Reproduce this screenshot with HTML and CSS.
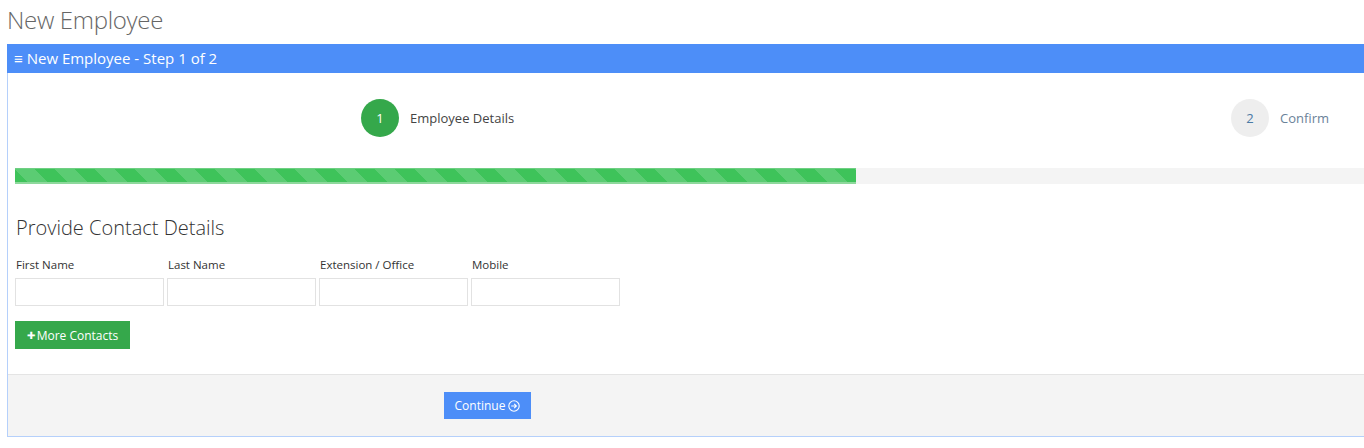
FILE: index.html
```html
<!DOCTYPE html>
<html>
<head>
<meta charset="utf-8" />
<title>New Employee</title>
<link rel="stylesheet" href="styles.css">
</head>
<body>
<h1 class="page-title">New Employee</h1>
<div class="panel">
	<div class="panel-heading"><span class="bars">&#8801;</span> New Employee - Step 1 of 2</div>
	<div class="panel-body">
		<div class="steps">
			<div class="step step-one">
				<span class="step-num active">1</span>
				<span class="step-label">Employee Details</span>
			</div>
			<div class="step step-two">
				<span class="step-num">2</span>
				<span class="step-label muted">Confirm</span>
			</div>
		</div>
		<div class="progress"><div class="progress-bar" style="width:61.85%"></div></div>
		<h2 class="section-title">Provide Contact Details</h2>
		<div class="fields">
			<div class="field"><label>First Name</label><input type="text" /></div>
			<div class="field"><label>Last Name</label><input type="text" /></div>
			<div class="field"><label>Extension / Office</label><input type="text" /></div>
			<div class="field"><label>Mobile</label><input type="text" /></div>
		</div>
		<button class="btn btn-green"><span class="plus">&#10010;</span>More Contacts</button>
	</div>
	<div class="panel-footer">
		<button class="btn btn-blue">Continue <svg class="arrow" width="12" height="12" viewBox="0 0 12 12"><circle cx="6" cy="6" r="5.2" fill="none" stroke="#fff" stroke-width="1.1"/><path d="M3.2 6h5M6.2 3.8L8.4 6 6.2 8.2" fill="none" stroke="#fff" stroke-width="1.1"/></svg></button>
	</div>
</div>
</body>
</html>
```

FILE: styles.css
```css
*{
	margin:0;
	padding:0;
	box-sizing:border-box;
}
body{
	overflow:hidden;
	background:#fff;
	font-family:"Open Sans", "Noto Sans", sans-serif;
	color:#333;
	padding:0 0 0 7px;
}
.page-title{
	font-weight:300;
	font-size:24px;
	color:#666;
	height:44px;
	line-height:40px;
	letter-spacing:-0.3px;
}
.panel{
	width:1370px;
	border:1px solid #b5d0fb;
	height:393px;
	display:flex;
	flex-direction:column;
}
.panel-heading{
	background:#4d8ef8;
	color:#fff;
	font-size:15px;
	height:29px;
	line-height:28px;
	padding-left:7px;
	margin:-1px -1px 0 -1px;
}
.bars{
	font-size:15px;
}
.panel-body{
	padding:0 0 0 7px;
	flex:1;
}
.steps{
	position:relative;
	height:95px;
}
.step{
	position:absolute;
	top:26px;
	display:flex;
	align-items:center;
}
.step-one{
	left:346px;
}
.step-two{
	left:1216px;
}
.step-num{
	width:38px;
	height:38px;
	border-radius:50%;
	background:#eee;
	color:#4b7aa5;
	font-size:13px;
	display:flex;
	align-items:center;
	justify-content:center;
	margin-right:11px;
}
.step-num.active{
	background:#35a84b;
	color:#fff;
}
.step-label{
	font-size:13px;
	color:#444;
}
.step-label.muted{
	color:#6a8299;
}
.progress{
	height:16px;
	background:#f4f4f4;
	width:1360px;
}
.progress-bar{
	height:16px;
	background-color:#3ec35a;
	background-image:linear-gradient(45deg, rgba(255,255,255,.15) 25%, transparent 25%, transparent 50%, rgba(255,255,255,.15) 50%, rgba(255,255,255,.15) 75%, transparent 75%, transparent);
	background-size:40px 40px;
	border-bottom:2px solid #8ed89c;
	border-top:1px solid #6fcf83;
}
.section-title{
	font-weight:300;
	font-size:20px;
	color:#333;
	margin-top:30px;
	padding-left:1px;
	height:40px;
}
.fields{
	display:flex;
	gap:3px;
	margin-top:4px;
}
.field{
	width:149px;
	display:flex;
	flex-direction:column;
}
.field label{
	font-size:11.5px;
	color:#333;
	padding-left:1px;
	height:14px;
	line-height:14px;
	margin-bottom:6px;
}
.field input{
	height:28px;
	border:1px solid #e2e2e2;
	background:#fff;
}
.btn{
	border:none;
	color:#fff;
	font-family:"Open Sans", "Noto Sans", sans-serif;
	font-size:12px;
	cursor:pointer;
}
.btn-green{
	background:#35a84b;
	height:28px;
	width:115px;
	margin-top:15px;
	display:flex;
	align-items:center;
	justify-content:center;
}
.plus{
	font-size:10px;
	margin-right:2px;
}
.panel-footer{
	background:#f4f4f4;
	border-top:1px solid #e4e4e4;
	height:62px;
	padding:17px 0 0 436px;
}
.btn-blue{
	background:#4d8ef8;
	height:27px;
	width:87px;
	display:flex;
	align-items:center;
	justify-content:center;
	gap:3px;
}
.arrow{
	display:block;
}
```
